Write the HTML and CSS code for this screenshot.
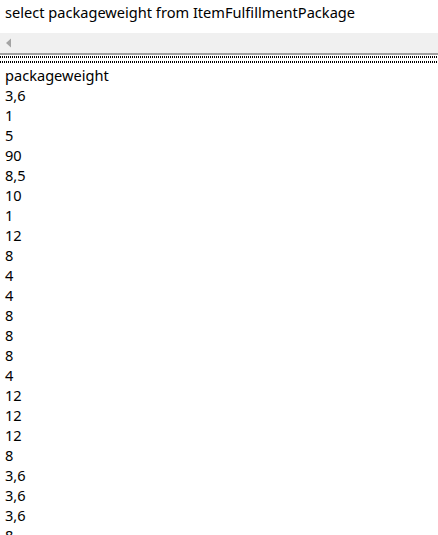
FILE: index.html
```html
<!DOCTYPE html>
<html>
<head>
<meta charset="utf-8">
<link rel="stylesheet" href="styles.css">
</head>
<body>
<div class="query">select packageweight from ItemFulfillmentPackage</div>
<div class="hscroll">
  <svg class="arrow" width="7" height="10" viewBox="0 0 7 10"><polygon points="6,0.5 6,9.5 1,5" fill="#a3a3a3"/></svg>
</div>
<div class="splitter"><div class="gline"></div><div class="dots"></div><div class="gap"></div><div class="dots"></div></div>
<div class="results">
  <div class="row">packageweight</div>
  <div class="row">3,6</div>
  <div class="row">1</div>
  <div class="row">5</div>
  <div class="row">90</div>
  <div class="row">8,5</div>
  <div class="row">10</div>
  <div class="row">1</div>
  <div class="row">12</div>
  <div class="row">8</div>
  <div class="row">4</div>
  <div class="row">4</div>
  <div class="row">8</div>
  <div class="row">8</div>
  <div class="row">8</div>
  <div class="row">4</div>
  <div class="row">12</div>
  <div class="row">12</div>
  <div class="row">12</div>
  <div class="row">8</div>
  <div class="row">3,6</div>
  <div class="row">3,6</div>
  <div class="row">3,6</div>
  <div class="row">8</div>
</div>
</body>
</html>
```
FILE: styles.css
```css
html, body {
  margin: 0;
  padding: 0;
  background: #fff;
  overflow: hidden;
}
body {
  font-family: "Noto Sans", "Open Sans", sans-serif;
  font-size: 14.6px;
  color: #000;
}
.query {
  height: 33px;
  line-height: 24px;
  padding-left: 5px;
  white-space: nowrap;
}
.hscroll {
  height: 20px;
  background: #f0f0f0;
  display: flex;
  align-items: center;
  padding-left: 5px;
}
.arrow {
  display: block;
}
.splitter {
  display: flex;
  flex-direction: column;
}
.gline {
  height: 2px;
  background: #a0a0a0;
}
.gap {
  height: 2px;
}
.dots {
  height: 2px;
  margin-top: 1px;
  background-image: repeating-linear-gradient(90deg, #000 0 1px, transparent 1px 2px);
}
.results {
  padding-top: 2px;
  padding-left: 5px;
}
.row {
  height: 20px;
  line-height: 20px;
  white-space: nowrap;
}
```
